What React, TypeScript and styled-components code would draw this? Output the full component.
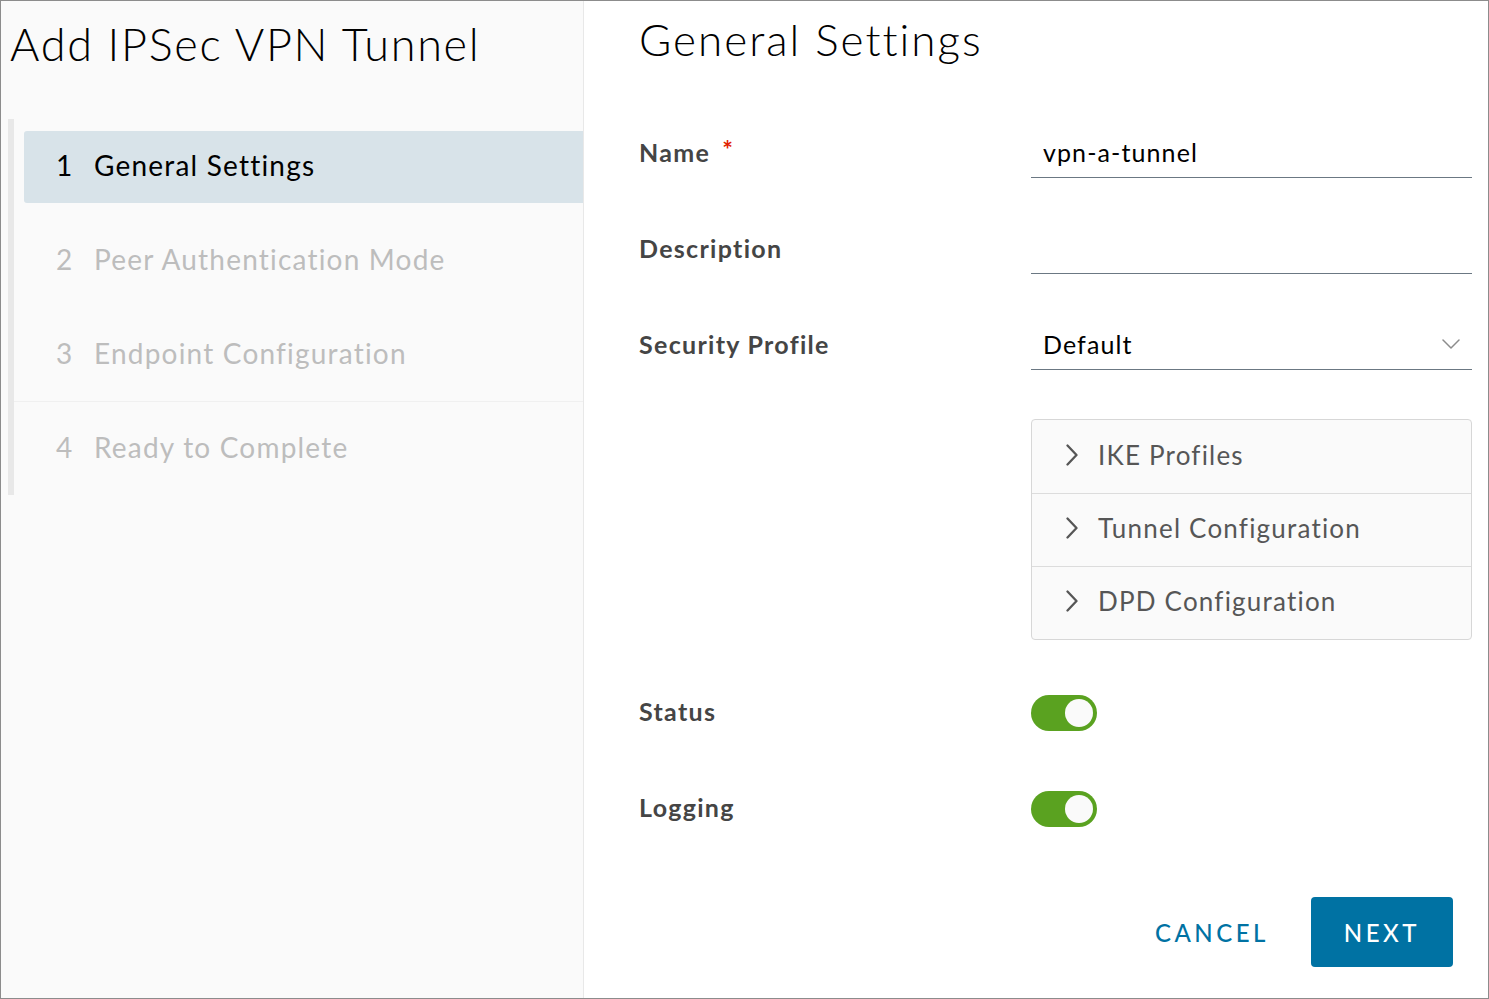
import { Fragment } from "react";
import styled, { createGlobalStyle } from "styled-components";

const GlobalStyle = createGlobalStyle`
  html, body {
    margin: 0;
    padding: 0;
    background: #ffffff;
  }
  * { box-sizing: border-box; }
  body {
    font-family: Lato, "Noto Sans", "Liberation Sans", sans-serif;
    color: #313131;
  }
`;

const Frame = styled.div`
  width: 1489px;
  height: 999px;
  border: 1px solid #8c8c8c;
  display: grid;
  grid-template-columns: 583px 1fr;
  overflow: hidden;
`;

const Sidebar = styled.aside`
  background: #fafafa;
  border-right: 1px solid #e8e8e8;
  display: flex;
  flex-direction: column;
`;

const WizardTitle = styled.h1`
  margin: 15px 0 0 9px;
  font-size: 45px;
  line-height: 56px;
  font-weight: 300;
  color: #000000;
  letter-spacing: 1.7px;
`;

const StepNav = styled.nav`
  margin: 47px 0 0 7px;
  padding: 12px 0 10px 0;
  border-left: 6px solid #e8e8e8;
  display: flex;
  flex-direction: column;
`;

const StepItem = styled.div<{ $active?: boolean }>`
  height: 72px;
  margin-left: 10px;
  padding: 0 0 4px 32px;
  display: flex;
  align-items: center;
  gap: 23px;
  font-size: 28px;
  letter-spacing: 1.2px;
  border-radius: 3px 0 0 3px;
  background: ${(p) => (p.$active ? "#d8e3e9" : "transparent")};
  color: ${(p) => (p.$active ? "#000000" : "#bdbdbd")};

  & + & {
    margin-top: 22px;
  }
`;

const StepNum = styled.span`
  width: 15px;
`;

const StepDivider = styled.hr`
  margin: 10px 0 11px 0;
  border: none;
  border-top: 1px solid #f0f0f0;
`;

const Main = styled.main`
  background: #ffffff;
  padding: 10px 16px 0 55px;
  display: flex;
  flex-direction: column;
`;

const PageTitle = styled.h2`
  margin: 0;
  font-size: 44px;
  line-height: 56px;
  font-weight: 300;
  color: #000000;
  letter-spacing: 2px;
`;

const Form = styled.div`
  margin-top: 39px;
  display: flex;
  flex-direction: column;
`;

const Row = styled.div<{ $gapTop?: number }>`
  display: grid;
  grid-template-columns: 392px 441px;
  align-items: center;
  min-height: 96px;
  margin-top: ${(p) => p.$gapTop ?? 0}px;
`;

const Label = styled.label`
  padding-bottom: 5px;
  font-size: 25px;
  font-weight: 700;
  letter-spacing: 1.3px;
  color: #454545;
`;

const Required = styled.span`
  color: #e12200;
  margin-left: 12px;
  font-size: 25px;
  line-height: 1;
  vertical-align: 3px;
`;

const TextInput = styled.input`
  height: 48px;
  width: 100%;
  border: none;
  border-bottom: 1px solid #6b7883;
  background: transparent;
  padding: 0 12px 3px;
  font-family: inherit;
  font-size: 25px;
  letter-spacing: 1.1px;
  color: #000000;
  outline: none;
`;

const SelectBox = styled.div`
  height: 48px;
  border-bottom: 1px solid #6b7883;
  padding: 0 12px 3px;
  display: flex;
  align-items: center;
  justify-content: space-between;
  font-size: 25px;
  letter-spacing: 1.1px;
  color: #000000;
`;

const Accordion = styled.div`
  grid-column: 2;
  border: 1px solid #d7d7d7;
  border-radius: 4px;
  background: #fafafa;
  overflow: hidden;
`;

const Panel = styled.div`
  height: 73px;
  display: flex;
  align-items: center;
  gap: 15px;
  padding: 0 0 4px 31px;
  font-size: 26px;
  letter-spacing: 1.2px;
  color: #565656;

  & + & {
    border-top: 1px solid #dcdcdc;
  }
`;

const Toggle = styled.span<{ $on?: boolean }>`
  width: 66px;
  height: 36px;
  border-radius: 18px;
  background: ${(p) => (p.$on ? "#5aa220" : "#8c8c8c")};
  display: flex;
  align-items: center;
  justify-content: ${(p) => (p.$on ? "flex-end" : "flex-start")};
  padding: 0 4px;
`;

const Knob = styled.span`
  width: 28px;
  height: 28px;
  border-radius: 50%;
  background: #fafafa;
`;

const Footer = styled.div`
  margin-top: 40px;
  margin-right: 19px;
  display: flex;
  justify-content: flex-end;
  align-items: center;
  gap: 18px;
`;

const Button = styled.button<{ $primary?: boolean }>`
  height: 70px;
  padding: 0 ${(p) => (p.$primary ? 33 : 24)}px;
  border: none;
  border-radius: 4px;
  font-family: inherit;
  font-size: 24px;
  font-weight: 500;
  letter-spacing: 3.5px;
  background: ${(p) => (p.$primary ? "#0072a3" : "transparent")};
  color: ${(p) => (p.$primary ? "#ffffff" : "#0072a3")};
  cursor: pointer;
`;

const ChevronRight = () => (
  <svg width="20" height="22" viewBox="0 0 20 22" fill="none">
    <path
      d="M4.5 1.5 L13.5 11 L4.5 20.5"
      stroke="#565656"
      strokeWidth="2.3"
      strokeLinecap="round"
      strokeLinejoin="round"
    />
  </svg>
);

const ChevronDown = () => (
  <svg width="18" height="12" viewBox="0 0 18 12" fill="none">
    <path
      d="M1 2 L9 10 L17 2"
      stroke="#8c8c8c"
      strokeWidth="1.5"
      strokeLinecap="round"
      strokeLinejoin="round"
    />
  </svg>
);

const steps = [
  "General Settings",
  "Peer Authentication Mode",
  "Endpoint Configuration",
  "Ready to Complete",
];

const panels = ["IKE Profiles", "Tunnel Configuration", "DPD Configuration"];

export default function App() {
  return (
    <>
      <GlobalStyle />
      <Frame>
        <Sidebar>
          <WizardTitle>Add IPSec VPN Tunnel</WizardTitle>
          <StepNav>
            {steps.map((s, i) => (
              <Fragment key={s}>
                {i === 3 && <StepDivider />}
                <StepItem $active={i === 0}>
                  <StepNum>{i + 1}</StepNum>
                  <span>{s}</span>
                </StepItem>
              </Fragment>
            ))}
          </StepNav>
        </Sidebar>
        <Main>
          <PageTitle>General Settings</PageTitle>
          <Form>
            <Row>
              <Label>
                Name<Required>*</Required>
              </Label>
              <TextInput defaultValue="vpn-a-tunnel" />
            </Row>
            <Row>
              <Label>Description</Label>
              <TextInput />
            </Row>
            <Row>
              <Label>Security Profile</Label>
              <SelectBox>
                <span>Default</span>
                <ChevronDown />
              </SelectBox>
            </Row>
            <Row $gapTop={25}>
              <Accordion>
                {panels.map((p) => (
                  <Panel key={p}>
                    <ChevronRight />
                    <span>{p}</span>
                  </Panel>
                ))}
              </Accordion>
            </Row>
            <Row $gapTop={25}>
              <Label>Status</Label>
              <Toggle $on>
                <Knob />
              </Toggle>
            </Row>
            <Row>
              <Label>Logging</Label>
              <Toggle $on>
                <Knob />
              </Toggle>
            </Row>
          </Form>
          <Footer>
            <Button>CANCEL</Button>
            <Button $primary>NEXT</Button>
          </Footer>
        </Main>
      </Frame>
    </>
  );
}
